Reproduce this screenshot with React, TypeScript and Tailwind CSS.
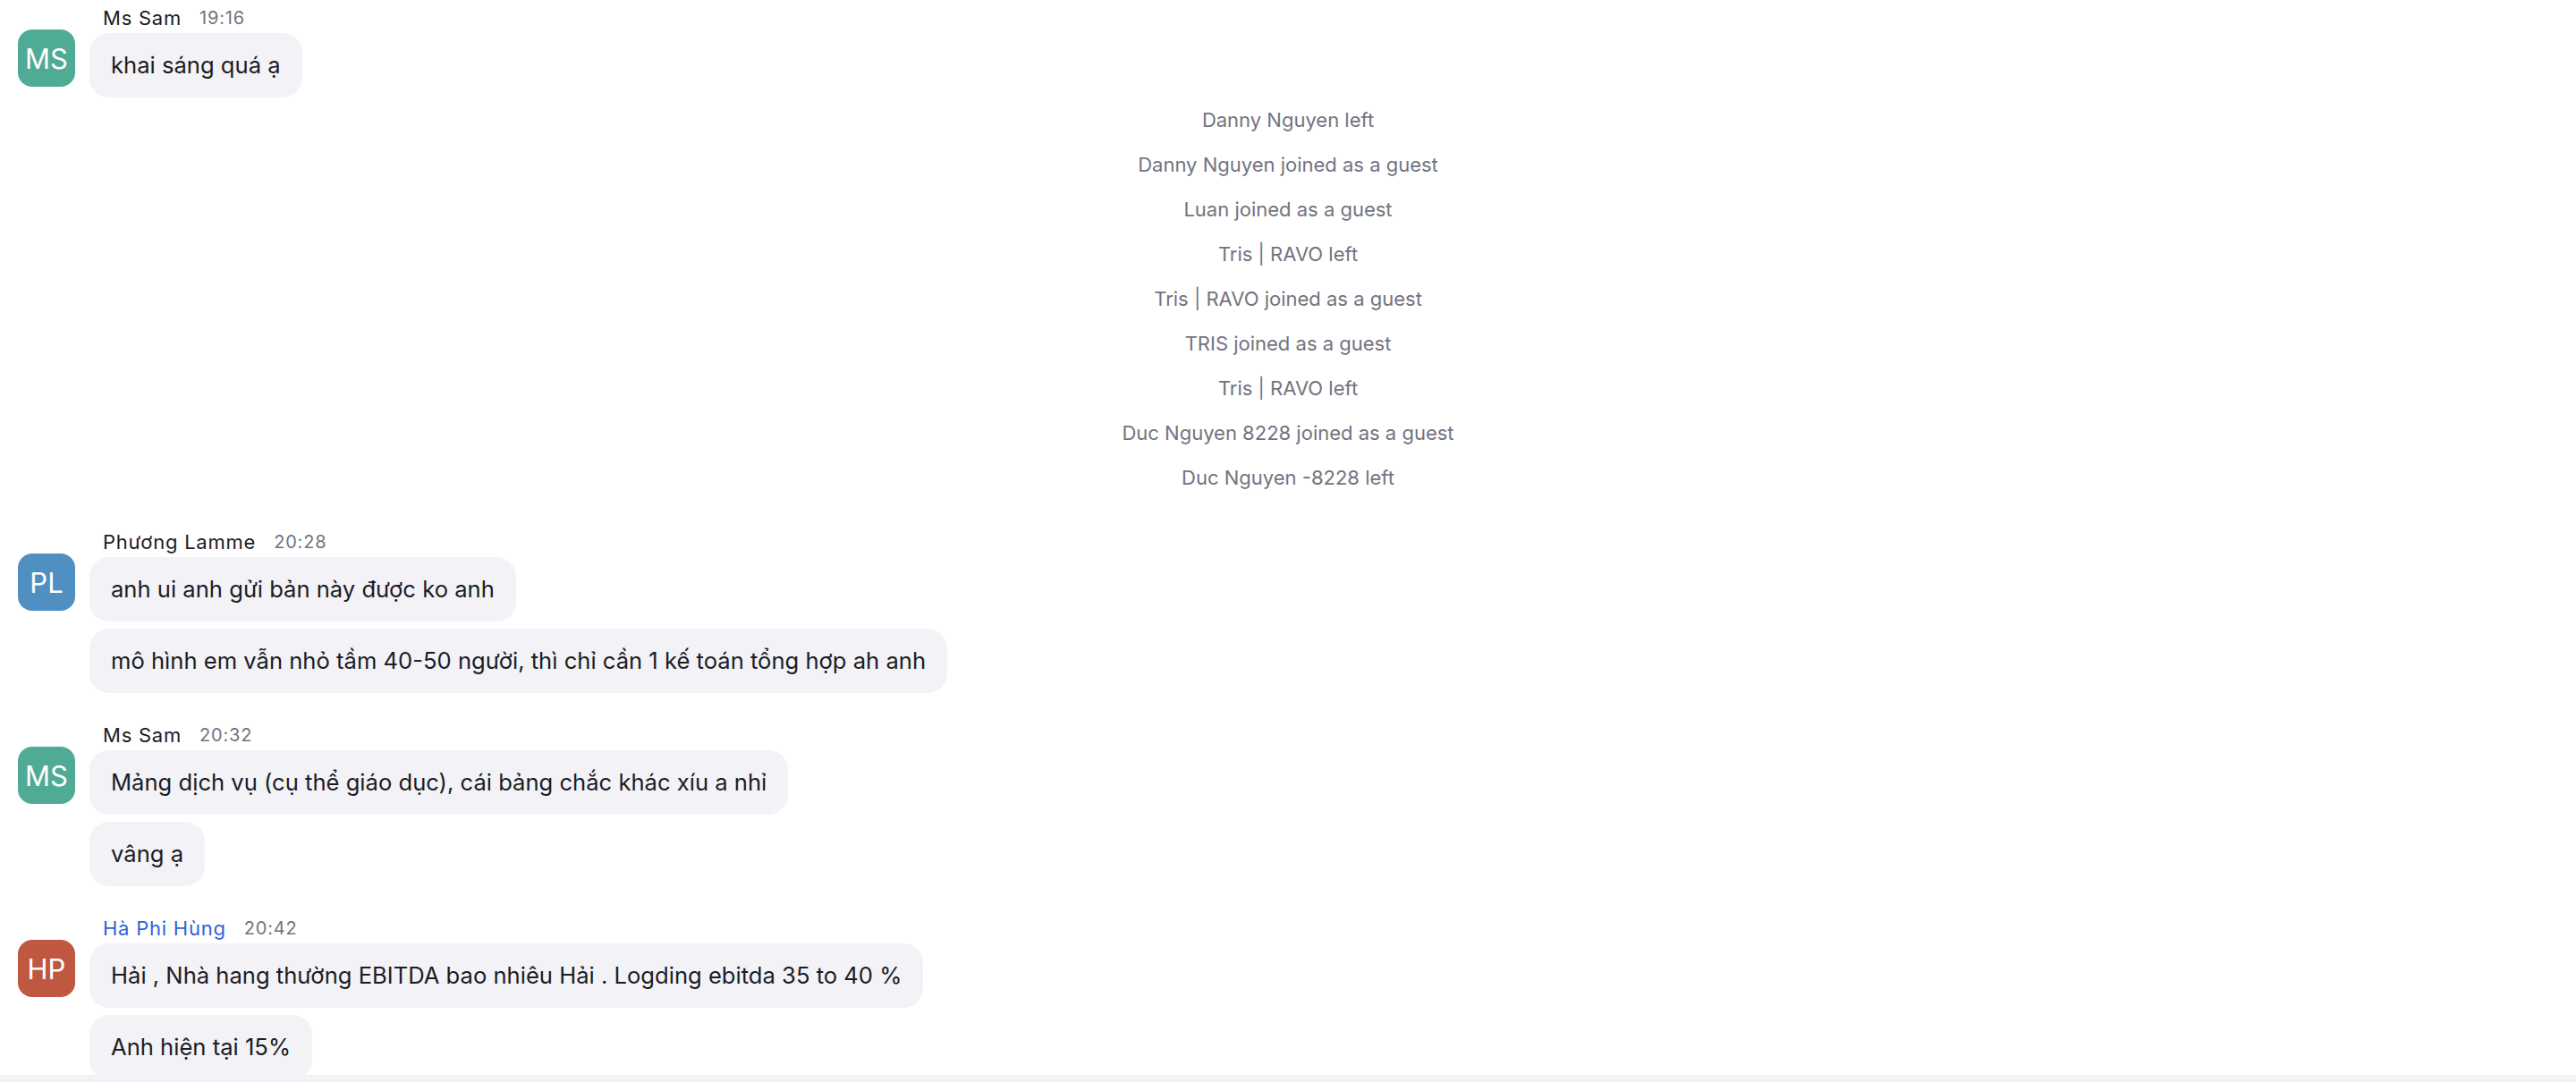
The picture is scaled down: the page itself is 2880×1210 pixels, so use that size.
const FONT = "font-['Inter','Liberation_Sans',sans-serif]";

type Group = {
  initials: string;
  avatar: string;
  name: string;
  nameColor?: string;
  time: string;
  messages: string[];
};

function Avatar({ initials, color }: { initials: string; color: string }) {
  return (
    <div
      className={`w-16 h-16 rounded-2xl flex items-center justify-center text-white text-[31px] leading-none ${color}`}
    >
      {initials}
    </div>
  );
}

function MessageGroup({ group }: { group: Group }) {
  return (
    <div className="flex flex-col">
      <div className="flex items-center gap-5 h-[30px] mb-[2px] pl-[115px]">
        <span className={`text-[22px] tracking-[0.035em] ${group.nameColor ?? 'text-[#1c1c24]'}`}>
          {group.name}
        </span>
        <span className="text-[20px] tracking-[0.04em] text-[#73737f]">{group.time}</span>
      </div>
      <div className="flex gap-4 pl-5">
        <div className="-mt-1">
          <Avatar initials={group.initials} color={group.avatar} />
        </div>
        <div className="flex flex-col items-start gap-2">
          {group.messages.map((m, i) => (
            <div
              key={i}
              className="bg-[#f2f2f7] rounded-[22px] px-6 py-[18px] text-[25.6px] leading-9 text-[#1c1c24]"
            >
              {m}
            </div>
          ))}
        </div>
      </div>
    </div>
  );
}

const systemLines = [
  'Danny Nguyen left',
  'Danny Nguyen joined as a guest',
  'Luan joined as a guest',
  'Tris | RAVO left',
  'Tris | RAVO joined as a guest',
  'TRIS joined as a guest',
  'Tris | RAVO left',
  'Duc Nguyen 8228 joined as a guest',
  'Duc Nguyen -8228 left',
];

export default function App() {
  const first: Group = {
    initials: 'MS',
    avatar: 'bg-[#50ab96]',
    name: 'Ms Sam',
    time: '19:16',
    messages: ['khai sáng quá ạ'],
  };
  const rest: Group[] = [
    {
      initials: 'PL',
      avatar: 'bg-[#4f8fc2]',
      name: 'Phương Lamme',
      time: '20:28',
      messages: [
        'anh ui anh gửi bản này được ko anh',
        'mô hình em vẫn nhỏ tầm 40-50 người, thì chỉ cần 1 kế toán tổng hợp ah anh',
      ],
    },
    {
      initials: 'MS',
      avatar: 'bg-[#50ab96]',
      name: 'Ms Sam',
      time: '20:32',
      messages: ['Mảng dịch vụ (cụ thể giáo dục), cái bảng chắc khác xíu a nhỉ', 'vâng ạ'],
    },
    {
      initials: 'HP',
      avatar: 'bg-[#c05841]',
      name: 'Hà Phi Hùng',
      nameColor: 'text-[#2f64d4]',
      time: '20:42',
      messages: ['Hải , Nhà hang thường EBITDA bao nhiêu Hải . Logding ebitda 35 to 40 %', 'Anh hiện tại 15%'],
    },
  ];

  return (
    <div className={`w-[2880px] h-[1210px] bg-white flex flex-col overflow-hidden ${FONT}`}>
      <div className="flex-1 min-h-0 overflow-hidden pt-[5px]">
        <MessageGroup group={first} />
        <div className="flex flex-col items-center">
          {systemLines.map((line, i) => (
            <div key={i} className="h-[50px] leading-[50px] text-[22px] text-[#73737f]">
              {line}
            </div>
          ))}
        </div>
        <div className="flex flex-col gap-8 mt-8">
          {rest.map((g, i) => (
            <MessageGroup key={i} group={g} />
          ))}
        </div>
      </div>
      <div className="h-2 bg-[#f2f2f7] shrink-0" />
    </div>
  );
}
